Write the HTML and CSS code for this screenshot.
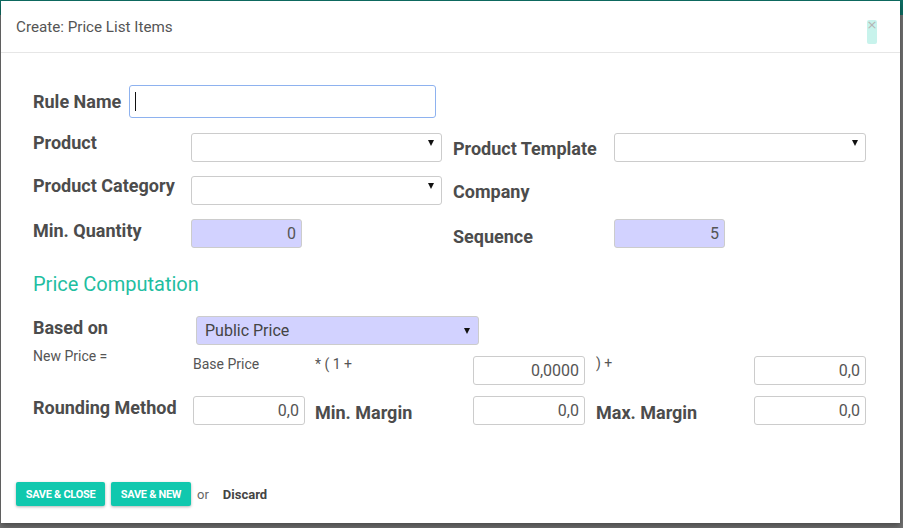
FILE: index.html
```html
<!DOCTYPE html>
<html>
<head>
<meta charset="utf-8">
<link rel="stylesheet" href="styles.css">
</head>
<body>
<div class="backdrop">
  <div class="modal">
    <div class="modal-header">
      <div class="modal-title">Create: Price List Items</div>
      <button class="close"><span>×</span></button>
    </div>
    <div class="modal-body">
      <div class="title-row">
        <label class="lbl title-lbl">Rule Name</label>
        <div class="input focus"><span class="caret"></span></div>
      </div>

      <div class="grid-top">
        <label class="lbl l-left">Product</label>
        <div class="select"><span class="arrow top"></span></div>
        <label class="lbl l-right">Product Template</label>
        <div class="select"><span class="arrow top"></span></div>

        <label class="lbl l-left">Product Category</label>
        <div class="select"><span class="arrow top"></span></div>
        <label class="lbl l-right">Company</label>
        <div></div>

        <label class="lbl l-left qty">Min. Quantity</label>
        <div class="input num req short">0</div>
        <label class="lbl l-right seq">Sequence</label>
        <div class="input num req short">5</div>
      </div>

      <h2 class="section">Price Computation</h2>

      <div class="based-row">
        <label class="lbl based-lbl">Based on</label>
        <div class="select req big"><span class="sel-text">Public Price</span><span class="arrow"></span></div>
      </div>

      <div class="grid-price">
        <div class="small new-price">New Price =</div>
        <div class="small pad">Base Price</div>
        <div class="small pad ind">* ( 1 +</div>
        <div class="input num fld">0,0000</div>
        <div class="small pad ind2">) +</div>
        <div class="input num fld">0,0</div>
      </div>

      <div class="grid-price round">
        <label class="lbl rnd-lbl">Rounding Method</label>
        <div class="input num fld">0,0</div>
        <label class="lbl mid-lbl ind">Min. Margin</label>
        <div class="input num fld">0,0</div>
        <label class="lbl mid-lbl ind2">Max. Margin</label>
        <div class="input num fld">0,0</div>
      </div>
    </div>
    <div class="modal-footer">
      <button class="btn btn-close">SAVE &amp; CLOSE</button>
      <button class="btn btn-new">SAVE &amp; NEW</button>
      <span class="or">or</span>
      <a class="discard">Discard</a>
    </div>
  </div>
</div>
</body>
</html>
```

FILE: styles.css
```css
* { box-sizing: border-box; }
html, body { margin: 0; padding: 0; }
body {
  width: 903px;
  height: 528px;
  overflow: hidden;
  font-family: Roboto, "Liberation Sans", sans-serif;
  background: linear-gradient(to bottom, #0e6d63 0, #0e6d63 15px, #717171 15px);
}
.backdrop {
  padding: 1px 0 0 1px;
}
.modal {
  width: 899px;
  height: 522px;
  background: #fff;
  box-shadow: 0 3px 6px rgba(0,0,0,0.35);
  display: flex;
  flex-direction: column;
}
.modal-header {
  height: 52px;
  border-bottom: 1px solid #e6e6e6;
  display: flex;
  justify-content: space-between;
  align-items: flex-start;
  padding: 0 23px 0 15px;
}
.modal-title {
  margin-top: 17px;
  font-size: 15.2px;
  line-height: 18px;
  color: #555;
}
.close {
  margin-top: 19px;
  width: 10px;
  height: 24px;
  padding: 0;
  border: none;
  border-radius: 2px;
  background: #c8f3ec;
  display: flex;
  justify-content: center;
  align-items: flex-start;
  font-family: "DejaVu Sans", sans-serif;
  font-size: 13px;
  line-height: 10px;
  color: #b5b5b5;
  overflow: visible;
}
.modal-body {
  padding: 32px 0 0 32px;
}
.lbl {
  font-size: 18px;
  font-weight: bold;
  color: #4c4c4c;
  line-height: 19px;
  white-space: nowrap;
}
.title-row {
  display: flex;
  align-items: center;
}
.title-lbl { width: 96px; }
.input {
  border: 1px solid #ccc;
  border-radius: 3px;
  background: #fff;
  font-size: 16px;
  color: #555;
}
.input.focus {
  width: 307px;
  height: 33px;
  border-color: #8eb2ef;
  padding: 6px 0 0 5px;
}
.caret {
  display: block;
  width: 1px;
  height: 19px;
  background: #111;
}
.grid-top {
  margin-top: 15px;
  display: grid;
  grid-template-columns: 158px 251px 172px 252px;
  grid-auto-rows: 29px;
  row-gap: 14px;
}
.l-left { align-self: start; }
.l-left.qty { margin-top: 2px; }
.l-right { align-self: center; padding-left: 11px; padding-top: 1px; }
.l-right.seq { padding-top: 5px; }
.select {
  border: 1px solid #ccc;
  border-radius: 3px;
  background: #fff;
  display: flex;
  justify-content: space-between;
  align-items: center;
  padding: 0 7px 0 8px;
}
.select .arrow {
  margin-left: auto;
  width: 0;
  height: 0;
  border-left: 3px solid transparent;
  border-right: 3px solid transparent;
  border-top: 6px solid #111;
}
.select .arrow.top {
  align-self: flex-start;
  margin-top: 6px;
}
.req { background: #d2d2ff; }
.num {
  text-align: right;
  padding: 0 5px;
  line-height: 27px;
}
.short { width: 111px; }
.section {
  margin: 24px 0 0 0;
  font-size: 20px;
  font-weight: normal;
  line-height: 24px;
  color: #1fbea1;
}
.based-row {
  margin-top: 20px;
  display: flex;
  align-items: flex-start;
}
.based-lbl { width: 163px; padding-top: 2px; }
.select.big {
  width: 283px;
  height: 29px;
  padding: 0 8px 0 8px;
}
.sel-text {
  font-size: 16px;
  color: #444;
}
.grid-price {
  margin-top: 4px;
  display: grid;
  grid-template-columns: 160px 112px 168px 112px 169px 112px;
  align-items: start;
}
.small {
  font-size: 14px;
  line-height: 15px;
  color: #555;
  white-space: nowrap;
}
.pad { padding-top: 8px; }
.ind { padding-left: 10px; }
.ind2 { padding-left: 11px; padding-top: 7px; }
.fld {
  margin-top: 7px;
  height: 29px;
}
.grid-price.round { margin-top: 4px; }
.rnd-lbl { padding-top: 9px; }
.mid-lbl { padding-top: 14px; }
.mid-lbl.ind2 { padding-top: 14px; }
.modal-footer {
  margin-top: auto;
  padding: 0 0 17px 15px;
  display: flex;
  align-items: center;
}
.btn {
  height: 24px;
  border: none;
  border-radius: 2px;
  background: #10c8ae;
  color: #fff;
  font-family: Roboto, "Liberation Sans", sans-serif;
  font-size: 11px;
  font-weight: bold;
  letter-spacing: -0.3px;
  box-shadow: 0 1px 3px rgba(0,0,0,0.3);
  padding: 0;
}
.btn-close { width: 89px; }
.btn-new { width: 80px; margin-left: 6px; }
.or {
  margin-left: 6px;
  font-size: 13px;
  color: #666;
}
.discard {
  margin-left: 14px;
  font-size: 13px;
  font-weight: bold;
  color: #444;
}
```
